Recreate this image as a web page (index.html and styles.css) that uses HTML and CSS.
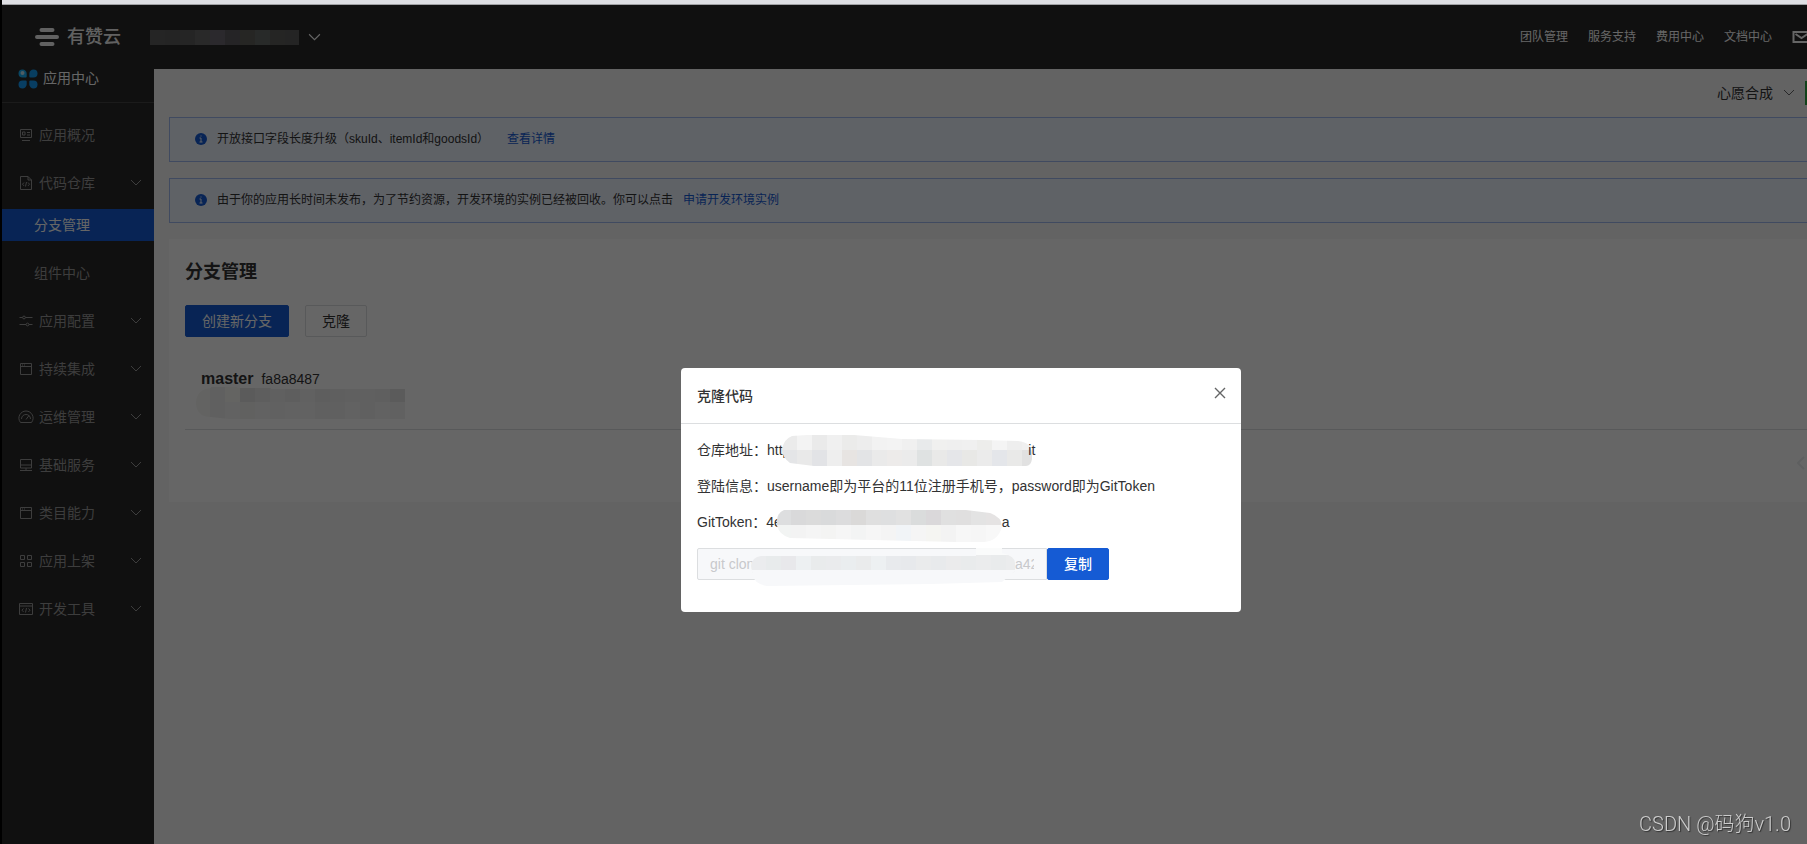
FILE: index.html
```html
<!DOCTYPE html>
<html lang="zh-CN">
<head>
<meta charset="utf-8">
<title>分支管理 - 有赞云</title>
<link rel="stylesheet" href="styles.css">
</head>
<body>
<svg class="sprite" aria-hidden="true">
  <symbol id="chevron" viewBox="0 0 12 8"><path d="M1 1l5 5 5-5"/></symbol>
  <symbol id="i-overview" viewBox="0 0 14 14"><path d="M1.5 1.5h11v8h-11zM3.5 4h2.500v3h-2.500zM8 4.500h3M8 7h3M3 12.500h8"/></symbol>
  <symbol id="i-code" viewBox="0 0 14 14"><path d="M1.500.5h7.500l3.500 3.500v9.500h-11zM9 .5v3.500h3.500M5 6.500l-1.500 1.700 1.500 1.700M9 6.500l1.500 1.700-1.500 1.700M7.500 6l-1 4.500"/></symbol>
  <symbol id="i-config" viewBox="0 0 14 14"><path d="M.5 3.500h3M6.500 3.500h7M.5 10.500h6.500M10 10.500h3.500"/><circle cx="5" cy="3.500" r="1.400"/><circle cx="8.500" cy="10.500" r="1.400"/></symbol>
  <symbol id="i-window" viewBox="0 0 14 14"><path d="M1.500 1.500h11v11h-11zM1.500 4.500h11M3 3h1M5 3h1"/></symbol>
  <symbol id="i-gauge" viewBox="0 0 16 14"><path d="M2.500 12.500c-4-5 0-11.500 5.500-11.500s9.500 6.500 5.500 11.500zM3.500 9c0-6 9-6 9 0M8 9.500l3-4"/></symbol>
  <symbol id="i-server" viewBox="0 0 14 14"><path d="M1.500 1.500h11v8.500h-11zM1.500 7h11M7 10v2.500M1 12.500h12"/></symbol>
  <symbol id="i-grid" viewBox="0 0 14 14"><path d="M1.500 1.500h4v4h-4zM8.500 1.500h4v4h-4zM1.500 8.500h4v4h-4zM8.500 8.500h4v4h-4z"/></symbol>
  <symbol id="i-tools" viewBox="0 0 14 14"><path d="M.5 1.500h13v11h-13zM.5 4h13M4.500 6.500l-1.500 1.700 1.500 1.700M9.500 6.500l1.500 1.700-1.500 1.700M7.500 6l-1 4.500"/></symbol>
  <symbol id="i-info" viewBox="0 0 12 12"><circle cx="6" cy="6" r="6" fill="#155bd4" stroke="none"/><path d="M4.500 5h1.500v4M4.500 9h3M6 2.500v1" stroke="#edf4ff"/></symbol>
</svg>

<div class="browser-edge"></div>
<div class="app">
  <header class="header">
    <a class="brand" href="#">
      <svg class="brand-mark" viewBox="0 0 24 18" aria-hidden="true"><path d="M6.500 2h11M2 9h20M6.500 16h11"/></svg>
      <span>有赞云</span>
    </a>
    <button class="team" type="button" aria-label="切换团队">
      <svg class="team-name" data-cell="15" data-rows="#5c5c5c,#5a5a5a,#5e5e5e,#666,#6c6870,#5e5a60,#605f5b,#656968,#5c5c5a,#5a5a5a" viewBox="0 0 149 15"></svg>
      <svg class="chev-lg"><use href="#chevron"/></svg>
    </button>
    <nav class="top-nav">
      <a href="#">团队管理</a><a href="#">服务支持</a><a href="#">费用中心</a><a href="#">文档中心</a>
      <a href="#" aria-label="消息"><svg class="mail" viewBox="0 0 18 12"><path d="M1 1h16v10h-16zM3 3l6 4 6-4"/></svg></a>
    </nav>
  </header>

  <div class="columns">
    <aside class="sidebar">
      <div class="center">
        <svg class="center-icon" viewBox="0 0 20 20" aria-hidden="true">
          <path fill="#18b0f8" d="M4.500.5a4.200 4.200 0 0 1 4.200 4.200v2.800q0 1-1 1H4.500a4 4 0 0 1 0-8z"/>
          <path fill="#149cf0" d="M15.500.5a4 4 0 0 1 0 8h-3.200q-1 0-1-1V4.700A4.200 4.200 0 0 1 15.500.5z"/>
          <path fill="#149cf8" d="M4.500 19.500a4 4 0 0 1 0-8h3.200q1 0 1 1v2.800a4.200 4.200 0 0 1-4.200 4.200z"/>
          <path fill="#149cf8" d="M15.500 19.500a4.200 4.200 0 0 1-4.200-4.200v-2.800q0-1 1-1h3.200a4 4 0 0 1 0 8z"/>
          <circle cx="4.500" cy="4" r="2" fill="#c6e8f8"/>
        </svg>
        <span>应用中心</span>
      </div>
      <nav class="menu">
        <a class="item" href="#"><svg><use href="#i-overview"/></svg>应用概况</a>
        <a class="item" href="#"><svg><use href="#i-code"/></svg>代码仓库<svg class="chev"><use href="#chevron"/></svg></a>
        <div class="submenu">
          <a class="active" href="#">分支管理</a>
          <a href="#">组件中心</a>
        </div>
        <a class="item" href="#"><svg><use href="#i-config"/></svg>应用配置<svg class="chev"><use href="#chevron"/></svg></a>
        <a class="item" href="#"><svg><use href="#i-window"/></svg>持续集成<svg class="chev"><use href="#chevron"/></svg></a>
        <a class="item" href="#"><svg class="wide"><use href="#i-gauge"/></svg>运维管理<svg class="chev"><use href="#chevron"/></svg></a>
        <a class="item" href="#"><svg><use href="#i-server"/></svg>基础服务<svg class="chev"><use href="#chevron"/></svg></a>
        <a class="item" href="#"><svg><use href="#i-window"/></svg>类目能力<svg class="chev"><use href="#chevron"/></svg></a>
        <a class="item" href="#"><svg><use href="#i-grid"/></svg>应用上架<svg class="chev"><use href="#chevron"/></svg></a>
        <a class="item" href="#"><svg><use href="#i-tools"/></svg>开发工具<svg class="chev"><use href="#chevron"/></svg></a>
      </nav>
    </aside>

    <main class="main">
      <div class="app-bar">
        <button class="app-switch" type="button">心愿合成<svg class="chev"><use href="#chevron"/></svg></button>
        <span class="status"></span>
      </div>
      <div class="alert"><svg><use href="#i-info"/></svg><span>开放接口字段长度升级（skuId、itemId和goodsId）</span><a class="detail" href="#">查看详情</a></div>
      <div class="alert"><svg><use href="#i-info"/></svg><span>由于你的应用长时间未发布，为了节约资源，开发环境的实例已经被回收。你可以点击</span><a href="#">申请开发环境实例</a></div>
      <section class="card">
        <h1>分支管理</h1>
        <div class="actions">
          <button class="btn primary" type="button">创建新分支</button>
          <button class="btn" type="button">克隆</button>
        </div>
        <div class="branch">
          <div class="branch-head"><strong>master</strong><span>fa8a8487</span></div>
          <svg class="branch-note" data-cell="15" data-clip="M16 1Q2 2 1 15Q1 30 16 30L34 32H210V2H76V1H42V0H16z" viewBox="0 0 211 32"
            data-rows="#f8f8f5,#efefef,#fafaf6,#e3e3e3,#eaeaea,#f0f0f0,#ececec,#f3f3f3,#ebebeb,#eee,#efefef,#efefef,#eee,#e4e4e4;#f8f8f5,#f0f0f0,#f6f6f5,#f2f2f1,#f5f5f5,#f2f2f2,#f5f5f5,#f6f6f6,#f0f0f0,#f1f1ef,#f5f5f4,#f0f0f0,#f4f4f4,#f3f3f3"></svg>
        </div>
        <div class="pager"><button type="button" aria-label="上一页"><svg viewBox="0 0 8 14"><path d="M7 1L1 7l6 6"/></svg></button></div>
      </section>
    </main>
  </div>
</div>

<div class="overlay">
  <div class="dialog" role="dialog" aria-labelledby="dialog-title">
    <div class="dialog-head">
      <h2 id="dialog-title">克隆代码</h2>
      <button class="close" type="button" aria-label="关闭"><svg viewBox="0 0 12 12"><path d="M1 1l10 10M11 1L1 11"/></svg></button>
    </div>
    <div class="dialog-body">
      <p>仓库地址：http<svg class="mask mask-url" data-cell="15" viewBox="0 0 250 31" data-clip="M10 1Q30-1 72 0L120 4L200 5L236 6Q249 7 250 18V24Q249 31 244 31H32L8 28Q0 22 0 14Q2 4 10 1z"
        data-rows="#ebebeb,#f3f3f3,#eaeaea,#f0f0f0,#ebebea,#ededed,#f2f2f2,#f3f3f3,#f0f0f0,#e8eaeb,#f0f0ef,#efefef,#f0f0f0,#ededeb,#f4f4f4,#eee,#f0f0f0;#e4e5e7,#e9e9e9,#e2e3e6,#eee,#e7e4e2,#e3e4e6,#eaeaea,#edebea,#ebebeb,#dfe2e2,#e9e9e8,#e5e6e9,#e8e8e6,#ebebeb,#e4e6ea,#e9e9e8,#e1e1e1"></svg>it</p>
      <p>登陆信息：username即为平台的11位注册手机号，password即为GitToken</p>
      <p>GitToken：4e<svg class="mask mask-token" data-cell="15" viewBox="0 0 226 33" data-clip="M8 0H190L214 3Q226 7 226 17Q222 31 208 32L180 32L14 28Q3 25 1 15Q0 3 8 0z"
        data-rows="#dddedf,#d9d9da,#dbdbdb,#d9dadb,#dcdcdd,#dad9d8,#dfdfdf,#dedfe0,#e1e1e1,#dadcdc,#dad8da,#e0e0e0,#e0dfdf,#e3e3e3,#e5e3e3,#e4e5e4;#f2f4f3,#f3f3f3,#f5f5f5,#f4f4f3,#f6f6f6,#f3f4f4,#f6f6f6,#f4f4f4,#f1f4f7,#f5f5f5,#f5f5f2,#f3f3f3,#f7f7f7,#f6f6f6,#f8f8f8,#fafafa"></svg>a</p>
      <div class="copy-row">
        <div class="field">
          <input type="text" aria-label="克隆命令" value="git clone" readonly>
          <span class="tail">a42</span>
          <svg class="mask-cmd" data-cell="15" data-fade="7" viewBox="0 0 264 38" data-clip="M10 8H225V0H251V5Q264 8 264 15V23L251 34L180 36L16 38Q4 36 2 28L0 18Q1 9 10 8z"
            data-rows="#ebecee,#e8ebec,#e8e8eb,#edf0f2,#e9ebec,#eaebed,#eaedef,#eaebec,#edf0f2,#e8eaed,#e7e9ec,#eaebec,#e8eaec,#ebebec,#e9ebec,#ebeced,#e9ebec,#ebeced;#f7f8fa"></svg>
        </div>
        <button class="btn primary copy" type="button">复制</button>
      </div>
    </div>
  </div>
</div>
<div class="watermark">CSDN @码狗v1.0</div>
<script src="mosaic.js"></script>
</body>
</html>
```

FILE: styles.css
```css
* { box-sizing: border-box; }
body {
  margin: 0;
  height: 100vh;
  overflow: hidden;
  display: flex;
  flex-direction: column;
  border-left: 2px solid #000;
  background: #f7f7f7;
  color: #323233;
  font: 14px/20px "Liberation Sans", "Noto Sans CJK SC", sans-serif;
}
a { color: inherit; text-decoration: none; }
button, input { font: inherit; }
button { border: 0; padding: 0; background: none; color: inherit; }
h1, h2, p { margin: 0; }
svg { display: block; flex: none; fill: none; stroke: currentColor; }
.sprite { position: absolute; width: 0; height: 0; }
.browser-edge { flex: none; height: 5px; margin-left: -2px; background: #dedfe3; border-bottom: 1px solid #a0a1a4; }

.app { flex: 1; display: flex; flex-direction: column; }
.header { height: 64px; display: flex; align-items: center; background: #282828; color: #fff; padding-left: 33px; }
.brand { display: flex; align-items: center; gap: 8px; font-size: 18px; font-weight: 500; color: #f2f2f2; }
.brand-mark { width: 24px; height: 18px; stroke-width: 4; stroke-linecap: round; }
.team { display: flex; align-items: center; gap: 9px; margin-left: 29px; }
.team-name { width: 149px; height: 15px; }
.chev-lg { width: 13px; height: 9px; }
.top-nav { margin-left: auto; display: flex; align-items: center; gap: 20px; font-size: 12px; margin-right: -4px; }
.mail { width: 19px; height: 12px; stroke-width: 2; }

.columns { flex: 1; display: flex; }
.sidebar { width: 152px; flex: none; background: #282828; color: #999; }
.center { display: flex; gap: 5px; height: 34px; padding-left: 16px; border-bottom: 1px solid #444; color: #fff; line-height: 18px; }
.center-icon { width: 20px; height: 20px; stroke: none; }
.menu { padding-top: 8px; }
.item { display: flex; align-items: center; height: 48px; gap: 6px; padding: 0 12px 0 17px; }
.item svg { width: 14px; height: 14px; }
.item .wide { width: 16px; margin: 0 -1px; }
.item .chev { margin-left: auto; width: 12px; height: 8px; }
.submenu { display: flex; flex-direction: column; gap: 16px; padding: 2px 0 8px; }
.submenu a { padding-left: 32px; line-height: 32px; }
.submenu .active { background: #155bd4; color: #fff; }

.main { flex: 1; min-width: 0; padding-left: 15px; }
.app-bar { height: 48px; display: flex; justify-content: flex-end; align-items: center; gap: 10px; }
.app-switch { display: flex; align-items: center; gap: 10px; }
.app-switch .chev { width: 12px; height: 8px; color: #646566; }
.status { width: 2px; height: 24px; background: #2da641; }
.alert { display: flex; align-items: center; height: 45px; margin-bottom: 16px; padding: 0 0 2px 25px; border: 1px solid #a0baef; border-right: 0; background: #edf4ff; font-size: 12px; gap: 10px; }
.alert svg { width: 12px; height: 12px; }
.alert a { color: #155bd4; }
.alert .detail { margin-left: 8px; }
.card { background: #fff; padding: 20px 0 0 16px; height: 263px; }
.card h1 { font-size: 18px; line-height: 26px; }
.actions { display: flex; gap: 16px; margin-top: 20px; }
.btn { height: 32px; padding: 0 16px; border: 1px solid #dcdee0; border-radius: 2px; background: #fff; }
.primary { background: #155bd4; border-color: #155bd4; color: #fff; }
.branch { margin-top: 32px; height: 61px; border-bottom: 1px solid #dcdee0; }
.branch-head { display: flex; align-items: baseline; gap: 8px; padding-left: 16px; height: 18px; }
.branch-head strong { font-size: 16px; }
.branch-note { width: 211px; height: 32px; margin-left: 10px; }
.pager { display: flex; justify-content: flex-end; padding: 26px 2px 0 0; color: #ebedf0; }
.pager svg { width: 8px; height: 14px; stroke-width: 2; }

.overlay { position: fixed; top: 5px; right: 0; bottom: 0; left: 0; background: rgba(0, 0, 0, .6); }
.dialog { position: absolute; top: 363px; left: 681px; width: 560px; border-radius: 4px; background: #fff; }
.dialog-head { display: flex; align-items: center; justify-content: space-between; height: 56px; padding: 0 15px 0 16px; border-bottom: 1px solid #dcdee0; }
.dialog-head h2 { font-size: 14px; font-weight: 500; }
.close { margin-bottom: 6px; color: #646566; }
.close svg { width: 12px; height: 12px; stroke-width: 1.4; }
.dialog-body { padding: 8px 16px 32px; }
.dialog-body p { display: flex; align-items: center; height: 36px; }
.mask { margin: 0 -4px 0 -8px; }
.mask-url { width: 250px; height: 31px; }
.mask-token { width: 226px; height: 33px; margin: 8px 0 0 -6px; }
.copy-row { display: flex; margin-top: 8px; }
.field { position: relative; width: 350px; }
.field input { display: block; width: 100%; height: 32px; padding: 0 12px; border: 1px solid #dcdee0; border-radius: 2px 0 0 2px; background: #f7f8fa; color: #c8c9cc; outline: 0; }
.tail { position: absolute; top: 6px; right: 13px; width: 19px; overflow: hidden; color: #c8c9cc; }
.mask-cmd { position: absolute; top: 0; left: 54px; width: 264px; height: 38px; }
.copy { font-weight: 500; }
.watermark { position: fixed; right: 16px; bottom: 6px; font: 20px/28px Roboto, "Noto Sans CJK SC", sans-serif; font-weight: 300; color: #ccc; text-shadow: 1px 1px 1px #333; }
```

FILE: mosaic.js
```javascript
// Fills each svg[data-rows] with square colour cells, clipped to an optional outline.
const NS = "http://www.w3.org/2000/svg";

function addRect(parent, x, y, width, height, fill) {
  const rect = document.createElementNS(NS, "rect");
  const attributes = { x, y, width, height, fill, stroke: "none" };
  Object.entries(attributes).forEach(([name, value]) => rect.setAttribute(name, value));
  parent.append(rect);
}

document.querySelectorAll("svg[data-rows]").forEach((svg, n) => {
  const cell = Number(svg.dataset.cell);
  const fade = Number(svg.dataset.fade || 0);
  const box = svg.viewBox.baseVal;
  const group = document.createElementNS(NS, "g");
  if (svg.dataset.clip) {
    const clip = document.createElementNS(NS, "clipPath");
    clip.id = "outline-" + n;
    const path = document.createElementNS(NS, "path");
    path.setAttribute("d", svg.dataset.clip);
    clip.append(path);
    svg.append(clip);
    group.setAttribute("clip-path", `url(#${clip.id})`);
  }
  svg.dataset.rows.split(";").forEach((row, y) => {
    const colors = row.split(",");
    for (let x = 0; x * cell < box.width; x++) {
      addRect(group, x * cell, fade + y * cell, cell, cell + 3, colors[x % colors.length]);
    }
  });
  if (fade) addRect(group, 0, 0, box.width, fade, "#fafbfb");
  svg.append(group);
});
```
